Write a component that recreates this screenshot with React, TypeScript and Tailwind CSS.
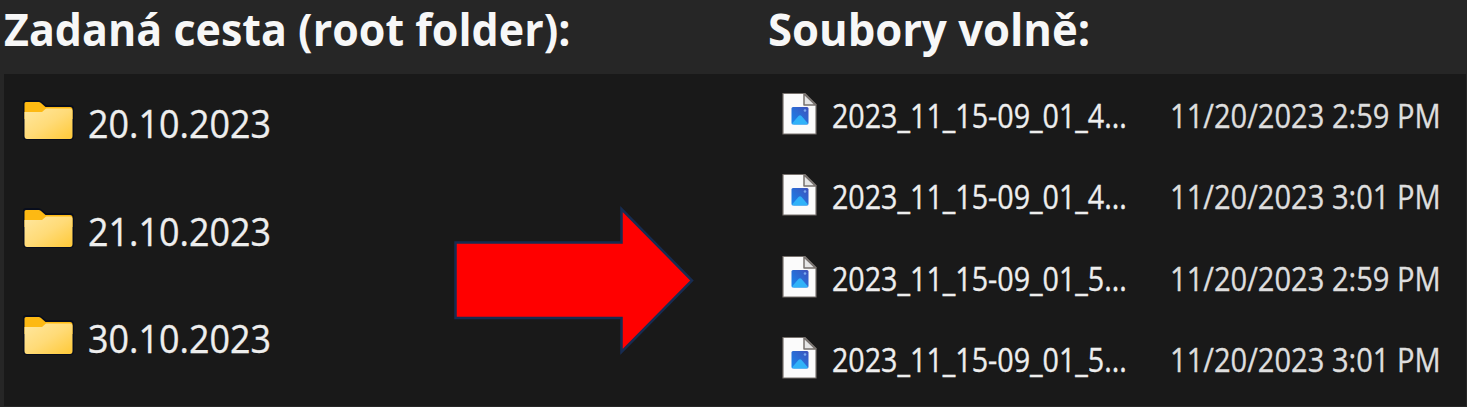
const folders = ["20.10.2023", "21.10.2023", "30.10.2023"];

const files = [
  { name: "2023_11_15-09_01_4...", date: "11/20/2023 2:59 PM" },
  { name: "2023_11_15-09_01_4...", date: "11/20/2023 3:01 PM" },
  { name: "2023_11_15-09_01_5...", date: "11/20/2023 2:59 PM" },
  { name: "2023_11_15-09_01_5...", date: "11/20/2023 3:01 PM" },
];

function FolderIcon() {
  return (
    <svg viewBox="0 0 54 44" className="h-[44px] w-[54px] shrink-0">
      <defs>
        <linearGradient id="folder" x1="0" y1="0" x2="1" y2="1">
          <stop offset="0" stopColor="#ffe79f" />
          <stop offset="0.5" stopColor="#ffdb78" />
          <stop offset="1" stopColor="#ffc937" />
        </linearGradient>
      </defs>
      <path d="M1 4Q1 1 4 1H16Q18 1 20 3L24 6H48Q52 6 52 10V37Q52 41 48 41H5Q1 41 1 37Z" fill="#080d1c" />
      <path d="M2.500 4.500Q2.500 3 4 3H16.500Q18 3 19 4L23.500 8H48Q50.500 8 50.500 10.500V20H2.500Z" fill="#fdb913" />
      <path d="M2.500 13H20L24 9.500H48Q50.500 9.500 50.500 12V37Q50.500 40 48 40H5Q2.500 40 2.500 37Z" fill="url(#folder)" />
    </svg>
  );
}

function PictureFileIcon() {
  return (
    <svg viewBox="0 0 36 44" className="mb-[4px] h-[44px] w-[36px] shrink-0">
      <defs>
        <linearGradient id="sky" x1="0" y1="1" x2="1" y2="0">
          <stop offset="0" stopColor="#1687ef" />
          <stop offset="1" stopColor="#3f50ba" />
        </linearGradient>
      </defs>
      <path d="M1 1.500H23L34 12.500V42H1Z" fill="#fbfbfb" stroke="#77716d" strokeWidth="1.200" />
      <path d="M22 2V13H33.500Z" fill="#e6e6e6" stroke="#77716d" strokeWidth="1.500" strokeLinejoin="round" />
      <rect x="9.500" y="15" width="17" height="17.500" rx="1.500" fill="url(#sky)" />
      <path d="M10 31.500L16.500 24Q18 22.500 19.500 24L26 31.500Q25 32.500 24 32.500H12Z" fill="#30b2f8" />
      <circle cx="23" cy="18.500" r="1.300" fill="#79a9ed" />
    </svg>
  );
}

function Arrow() {
  return (
    <svg viewBox="0 0 244 154" className="h-[154px] w-[244px] shrink-0">
      <path
        d="M4.500 40.500H170.500V7L241 78.500L170.500 150V116H4.500Z"
        fill="#ff0000"
        stroke="#172c51"
        strokeWidth="2.500"
      />
    </svg>
  );
}

export default function App() {
  return (
    <main className="flex h-[407px] w-[1467px] flex-col overflow-hidden bg-[#262626] pr-px pb-px pl-1">
      <header className="flex h-[74px] shrink-0 font-['Open_Sans',sans-serif] text-[44.5px] leading-[57px] font-bold text-[#f7f7f7]">
        <h1 className="w-[764px] shrink-0 whitespace-nowrap">
          <span className="inline-block origin-left scale-x-[0.966]">Zadaná cesta (root folder):</span>
        </h1>
        <h2 className="whitespace-nowrap">
          <span className="inline-block origin-left scale-x-[0.98]">Soubory volně:</span>
        </h2>
      </header>
      <section className="flex min-h-0 flex-1 bg-[#191919] font-['Open_Sans',sans-serif] text-[#eeeeee] [-webkit-text-stroke:0.35px_currentColor]">
        <ul className="flex w-[447px] shrink-0 flex-col pt-[25px] pl-[18px]">
          {folders.map((name) => (
            <li key={name} className="flex h-[107.5px] shrink-0 items-start">
              <FolderIcon />
              <span className="ml-[12px] inline-block origin-left scale-x-[0.92] text-[39px] leading-[48px] whitespace-nowrap">
                {name}
              </span>
            </li>
          ))}
        </ul>
        <div className="w-[331px] shrink-0 pt-[128px]">
          <Arrow />
        </div>
        <ul className="flex flex-col pt-[1px]">
          {files.map((file, index) => (
            <li key={index} className="flex h-[81.5px] shrink-0 items-center text-[32.5px] leading-[44px] whitespace-nowrap">
              <PictureFileIcon />
              <div className="w-[352px] shrink-0 pl-[14px]">
                <span className="inline-block origin-left scale-x-[0.881]">{file.name}</span>
              </div>
              <span className="inline-block origin-left scale-x-[0.895] text-[#dedede]">{file.date}</span>
            </li>
          ))}
        </ul>
      </section>
    </main>
  );
}
